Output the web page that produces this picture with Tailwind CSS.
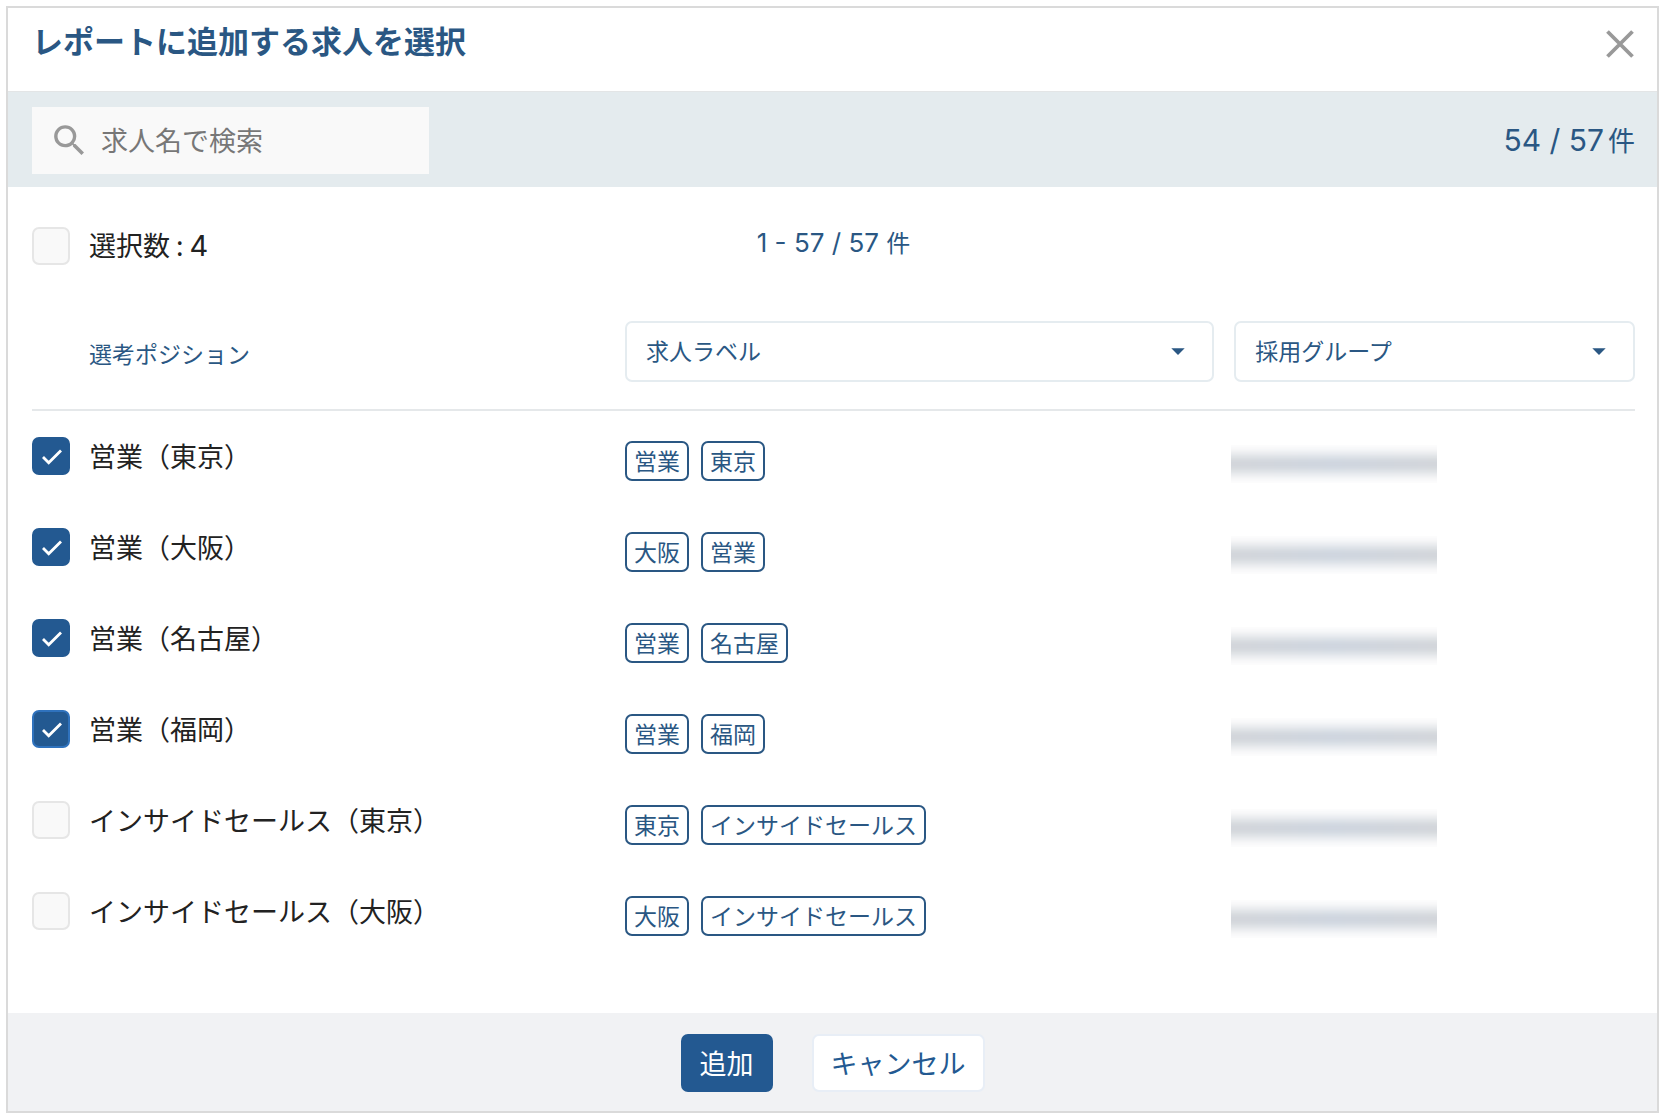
<!DOCTYPE html>
<html lang="ja">
<head>
  <meta charset="UTF-8" />
  <meta name="viewport" content="width=device-width, initial-scale=1.0" />
  <title>レポートに追加する求人を選択</title>
  <script src="https://cdn.jsdelivr.net/npm/@tailwindcss/browser@4"></script>
</head>
<body class="bg-white font-['Noto_Sans_CJK_JP',sans-serif] text-[#222]">

  <!-- Dialog -->
  <div class="flex min-h-screen flex-col pt-[6px] pr-[9px] pb-[7px] pl-[6px]">
    <div role="dialog" aria-labelledby="dialogTitle" class="flex flex-1 flex-col border-2 border-[#dadada]">

      <!-- Header -->
      <header class="flex items-center justify-between border-b border-[#e3e5e6] pt-[11px] pr-[18px] pb-[22px] pl-[24px]">
        <h1 id="dialogTitle" class="pb-2 text-[31px] leading-[42px] font-bold text-[#2a5783]">レポートに追加する求人を選択</h1>
        <button type="button" aria-label="閉じる" class="p-[5px] text-[#999]">
          <svg class="size-[28px]" viewBox="0 0 28 28" fill="none" stroke="currentColor" stroke-width="3.8">
            <path d="M1.5 1.5l25 25M26.5 1.5l-25 25" />
          </svg>
        </button>
      </header>

      <!-- Search bar -->
      <div class="flex items-center justify-between bg-[#e4ebee] pt-[15px] pr-[22px] pb-[13px] pl-[24px]">
        <label class="flex h-[67px] w-[397px] items-center bg-[#f9f9f9] pl-[17px]">
          <svg class="size-[41px] shrink-0" viewBox="0 0 24 24" fill="#999">
            <path d="M15.5 14h-.79l-.28-.27A6.471 6.471 0 0 0 16 9.5 6.5 6.5 0 1 0 9.5 16c1.61 0 3.09-.59 4.23-1.57l.27.28v.79l5 4.99L20.49 19l-4.99-5zm-6 0C7.01 14 5 11.99 5 9.5S7.01 5 9.5 5 14 7.01 14 9.5 11.99 14 9.5 14z" />
          </svg>
          <input type="search" aria-label="求人名で検索" placeholder="求人名で検索"
                 class="w-full min-w-0 pb-[2px] pl-[11px] text-[27px] leading-10 outline-none placeholder:text-[#777]" />
        </label>
        <p class="pb-[2px] text-[27px] leading-10 text-[#2a5783]"><span class="mr-1 font-['Inter',sans-serif] text-[30px]">54 / 57</span>件</p>
      </div>

      <main class="flex-1 pr-[22px] pl-[24px]">
        <!-- Selection summary -->
        <div class="grid grid-cols-[1fr_auto_1fr] items-center pt-[38px]">
          <label class="flex items-center gap-[19px] text-[27px] leading-10">
            <input type="checkbox" class="size-[38px] appearance-none rounded-[7px] border-2 border-[#e6e6e6] bg-[#f9f9f9]" />
            <span>選択数 : <span class="font-['Inter',sans-serif] text-[29px]">4</span></span>
          </label>
          <p class="pb-[6px] text-[24px] leading-8 text-[#2a5783]"><span class="font-['Inter',sans-serif] text-[26px]">1 - 57 / 57 </span>件</p>
        </div>

        <!-- Job list -->
        <table class="mt-[55px] w-full table-fixed">
          <thead>
            <tr class="border-b-2 border-[#e5e8ea] text-[23px] text-[#2a5783]">
              <th scope="col" class="w-[37%] pb-[23px] pl-[57px] text-left font-normal">選考ポジション</th>
              <th scope="col" class="w-[38%] pr-5 pb-[27px] font-normal">
                <div class="relative">
                  <select aria-label="求人ラベル" class="h-[61px] w-full appearance-none rounded-[7px] border-2 border-[#e5ecf0] bg-white px-[19px] pb-[3px]">
                    <option>求人ラベル</option>
                  </select>
                  <svg class="pointer-events-none absolute top-[14px] right-[20px] size-[32px]" viewBox="0 0 24 24" fill="currentColor"><path d="M7 10l5 5 5-5z" /></svg>
                </div>
              </th>
              <th scope="col" class="w-[25%] pb-[27px] font-normal">
                <div class="relative">
                  <select aria-label="採用グループ" class="h-[61px] w-full appearance-none rounded-[7px] border-2 border-[#e5ecf0] bg-white px-[19px] pb-[3px]">
                    <option>採用グループ</option>
                  </select>
                  <svg class="pointer-events-none absolute top-[14px] right-[20px] size-[32px]" viewBox="0 0 24 24" fill="currentColor"><path d="M7 10l5 5 5-5z" /></svg>
                </div>
              </th>
            </tr>
          </thead>
          <tbody id="jobRows"></tbody>
        </table>
      </main>

      <!-- Footer -->
      <footer class="flex items-center justify-center gap-[39px] bg-[#f1f2f4] pt-[21px] pb-[19px] text-[27px]">
        <button type="button" class="h-[58px] rounded-[7px] bg-[#235991] px-[19px] text-white">追加</button>
        <button type="button" class="h-[58px] rounded-[7px] border-2 border-[#e8eef6] bg-white px-[17px] text-[#235991]">キャンセル</button>
      </footer>
    </div>
  </div>

  <script>
    const jobs = [
      { name: '営業（東京）',             labels: ['営業', '東京'],             checked: true },
      { name: '営業（大阪）',             labels: ['大阪', '営業'],             checked: true },
      { name: '営業（名古屋）',           labels: ['営業', '名古屋'],           checked: true },
      { name: '営業（福岡）',             labels: ['営業', '福岡'],             checked: true, active: true },
      { name: 'インサイドセールス（東京）', labels: ['東京', 'インサイドセールス'], checked: false },
      { name: 'インサイドセールス（大阪）', labels: ['大阪', 'インサイドセールス'], checked: false }
    ];

    const tag = label =>
      `<li class="rounded-[7px] border-2 border-[#2a5783] px-[7px] pb-[2px] text-[23px] leading-[34px]">${label}</li>`;

    // One table row per job
    document.getElementById('jobRows').innerHTML = jobs.map(job => `
      <tr class="h-[91px]">
        <td>
          <label class="flex items-center gap-[19px] text-[27px] leading-10">
            <span class="grid">
              <input type="checkbox" ${job.checked ? 'checked' : ''}
                     class="peer col-start-1 row-start-1 size-[38px] appearance-none rounded-[7px] border-2 border-[#e6e6e6] bg-[#f9f9f9] checked:bg-[#235991] ${job.active ? 'checked:border-[#2f72bd]' : 'checked:border-[#235991]'}" />
              <svg class="pointer-events-none invisible col-start-1 row-start-1 size-[38px] peer-checked:visible" viewBox="0 0 38 38" fill="none" stroke="#fff" stroke-width="2.8">
                <path d="M11 20l5.7 5.7L29 13.4" />
              </svg>
            </span>
            <span>${job.name}</span>
          </label>
        </td>
        <td class="pt-[10px]">
          <ul class="flex gap-3 text-[#2a5783]">${job.labels.map(tag).join('')}</ul>
        </td>
        <td class="pt-4">
          <!-- masked group name -->
          <div class="-ml-[3px] flex h-[38px] w-[206px] items-center overflow-hidden">
            <div class="-mx-4 h-[16px] flex-1 bg-linear-to-r from-[#c6cacf] via-[#c1cad6] to-[#c6cacf] blur-[7px]"></div>
          </div>
        </td>
      </tr>`).join('');
  </script>
</body>
</html>
